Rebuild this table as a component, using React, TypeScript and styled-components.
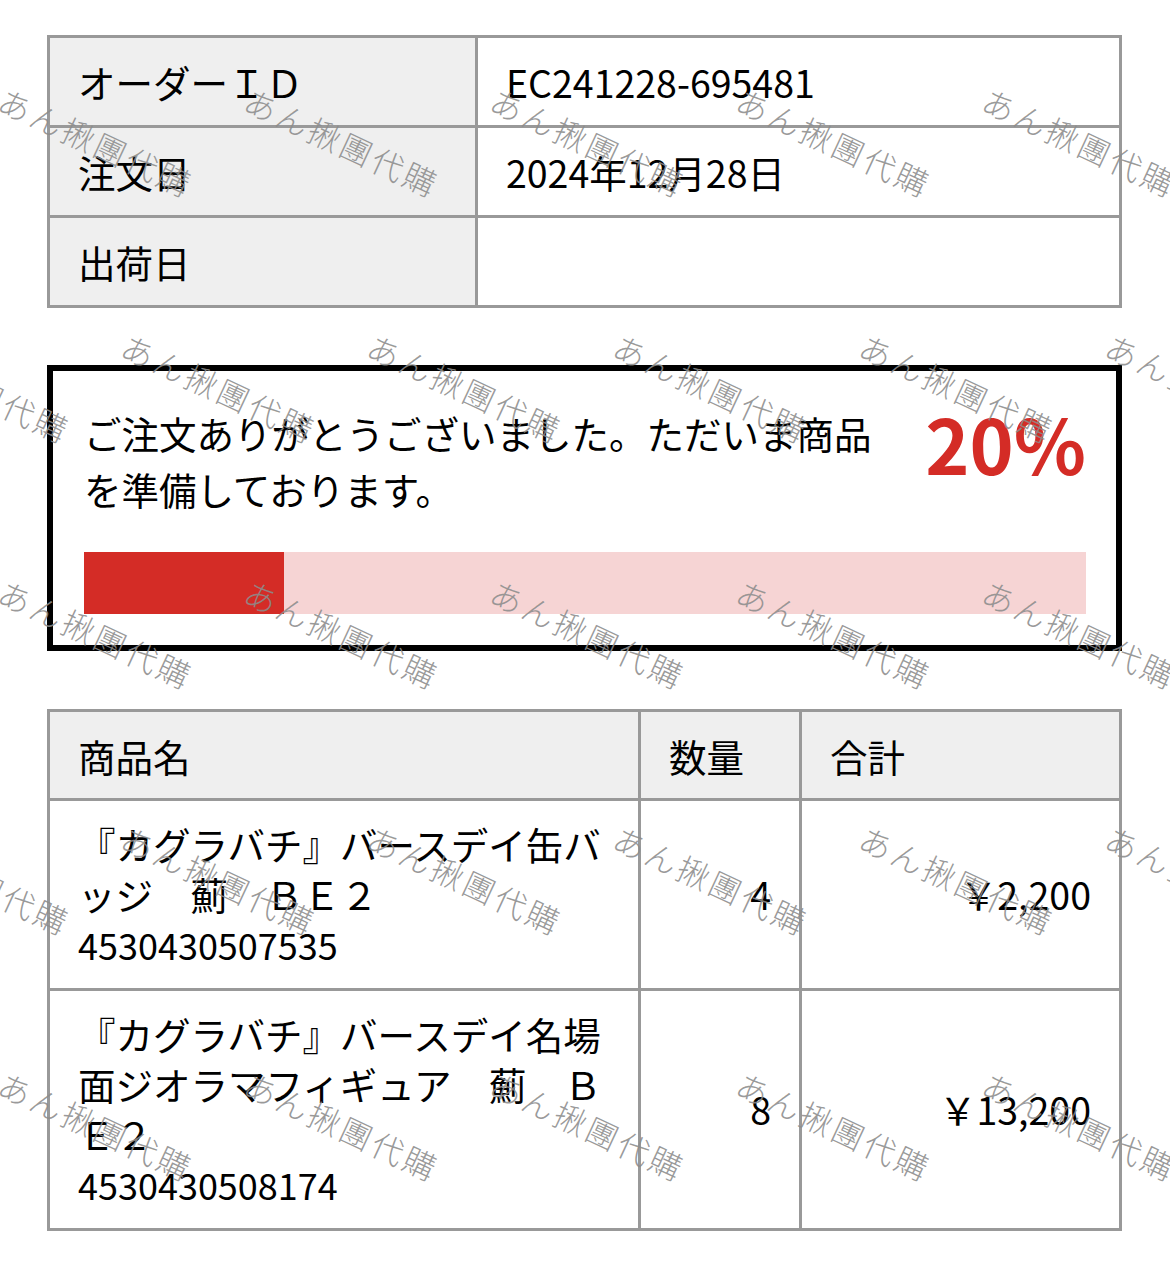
import React from "react";
import styled, { createGlobalStyle } from "styled-components";

const GlobalStyle = createGlobalStyle`
  html, body { margin: 0; padding: 0; background: #fff; }
  body {
    font-family: "Noto Sans CJK JP", "Noto Sans", sans-serif;
    color: #000;
  }
  * { box-sizing: border-box; }
`;

const Page = styled.div`
  position: relative;
  min-height: 1262px;
  padding: 35px 48px 32px 47px;
  overflow: hidden;
  display: flex;
  flex-direction: column;
`;

const InfoGrid = styled.div`
  display: grid;
  grid-template-columns: 425px 1fr;
  grid-auto-rows: 87px;
  gap: 3px;
  padding: 3px;
  background: #999;
`;

const Cell = styled.div<{ $head?: boolean }>`
  display: flex;
  align-items: center;
  padding: 0 28px;
  font-size: 37.5px;
  background: ${(p) => (p.$head ? "#efefef" : "#fff")};
`;

const ProgressBox = styled.section`
  margin-top: 57px;
  border: 6px solid #000;
  padding: 34px 30px 31px 31px;
  display: flex;
  flex-direction: column;
`;

const ProgressTop = styled.div`
  display: flex;
  align-items: flex-start;
  gap: 40px;
  margin-bottom: 35px;
`;

const Message = styled.p`
  flex: 1;
  margin: 0;
  font-size: 37.5px;
  line-height: 56px;
`;

const Percent = styled.div`
  font-size: 75px;
  font-weight: 700;
  line-height: 1;
  color: #d42c26;
`;

const Track = styled.div`
  height: 62px;
  background: #f6d4d4;
  display: flex;
`;

const Fill = styled.div`
  background: #d42c26;
  height: 100%;
`;

const ProductGrid = styled.div`
  margin-top: 58px;
  display: grid;
  grid-template-columns: 588px 158px 1fr;
  gap: 3px;
  padding: 3px;
  background: #999;
`;

const HeadCell = styled.div`
  height: 86px;
  display: flex;
  align-items: center;
  padding: 0 28px;
  font-size: 37.5px;
  background: #efefef;
`;

const BodyCell = styled.div<{ $align?: "left" | "right" }>`
  background: #fff;
  padding: 18px 28px 19px;
  font-size: 37.5px;
  line-height: 50px;
  display: flex;
  flex-direction: column;
  justify-content: center;
  align-items: ${(p) => (p.$align === "right" ? "flex-end" : "flex-start")};
`;

const Name = styled.div`
  line-break: loose;
  word-break: normal;
`;

const Code = styled.div`
  font-size: 36px;
`;

const WatermarkLayer = styled.div`
  position: absolute;
  top: 0;
  left: 0;
  width: 1170px;
  height: 100%;
  pointer-events: none;
  overflow: hidden;
  z-index: 2;
  padding-top: 71px;
  display: flex;
  flex-direction: column;
`;

const WatermarkRow = styled.div<{ $odd: boolean }>`
  height: 246px;
  display: flex;
  flex-shrink: 0;
  margin-left: ${(p) => (p.$odd ? "-167px" : "-44px")};
`;

const Mark = styled.span`
  flex: 0 0 246px;
  display: block;
  font-size: 32px;
  line-height: 1;
  font-weight: 300;
  letter-spacing: 3px;
  color: rgba(140, 140, 140, 0.88);
  white-space: nowrap;
  transform: rotate(25deg);
  transform-origin: 0 50%;
`;

const infoRows = [
  { label: "オーダーＩＤ", value: "EC241228-695481" },
  { label: "注文日", value: "2024年12月28日" },
  { label: "出荷日", value: "" },
];

const products = [
  {
    name: "『カグラバチ』バースデイ缶バッジ　薊　ＢＥ２",
    code: "4530430507535",
    qty: "4",
    total: "￥2,200",
  },
  {
    name: "『カグラバチ』バースデイ名場面ジオラマフィギュア　薊　ＢＥ２",
    code: "4530430508174",
    qty: "8",
    total: "￥13,200",
  },
];

const progress = 20;

export default function App() {
  return (
    <>
      <GlobalStyle />
      <Page lang="ja">
        <InfoGrid>
          {infoRows.map((r) => (
            <React.Fragment key={r.label}>
              <Cell $head>{r.label}</Cell>
              <Cell>{r.value}</Cell>
            </React.Fragment>
          ))}
        </InfoGrid>

        <ProgressBox>
          <ProgressTop>
            <Message>
              ご注文ありがとうございました。ただいま商品を準備しております。
            </Message>
            <Percent>{progress}%</Percent>
          </ProgressTop>
          <Track>
            <Fill style={{ width: `${progress}%` }} />
          </Track>
        </ProgressBox>

        <ProductGrid>
          <HeadCell>商品名</HeadCell>
          <HeadCell>数量</HeadCell>
          <HeadCell>合計</HeadCell>
          {products.map((p) => (
            <React.Fragment key={p.code}>
              <BodyCell>
                <Name>{p.name}</Name>
                <Code>{p.code}</Code>
              </BodyCell>
              <BodyCell $align="right">{p.qty}</BodyCell>
              <BodyCell $align="right">{p.total}</BodyCell>
            </React.Fragment>
          ))}
        </ProductGrid>

        <WatermarkLayer aria-hidden="true">
          {Array.from({ length: 6 }).map((_, r) => (
            <WatermarkRow key={r} $odd={r % 2 === 1}>
              {Array.from({ length: 7 }).map((__, c) => (
                <Mark key={c}>あん揪團代購</Mark>
              ))}
            </WatermarkRow>
          ))}
        </WatermarkLayer>
      </Page>
    </>
  );
}
